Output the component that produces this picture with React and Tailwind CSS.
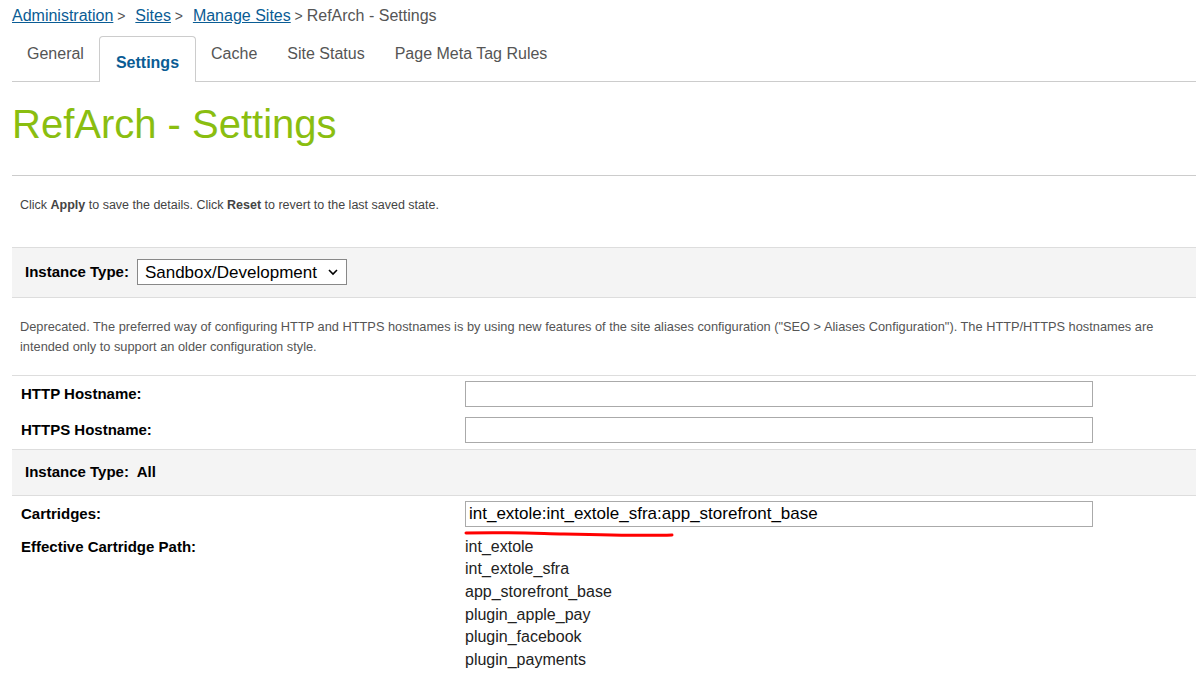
export default function App() {
  const paths = ["int_extole","int_extole_sfra","app_storefront_base","plugin_apple_pay","plugin_facebook","plugin_payments"];
  return (
    <div className="w-[1196px] h-[679px] overflow-hidden bg-white text-[#333]" style={{fontFamily:'"Liberation Sans", Arial, sans-serif'}}>
      <div className="pl-[12px] pt-[6px] text-[16px] leading-[20px] text-[#555]">
        <a className="underline text-[#0a5c94]">Administration</a><span className="text-[14px]"> &gt; </span>
        <a className="underline text-[#0a5c94] ml-[6px]">Sites</a><span className="text-[14px]"> &gt; </span>
        <a className="underline text-[#0a5c94] ml-[6px]">Manage Sites</a><span className="text-[14px]"> &gt; </span>RefArch - Settings
      </div>
      <div className="ml-[12px] mt-[10px] flex items-end border-b border-[#ccc] h-[46px] text-[16px] text-[#555]">
        <div className="px-[15px] pb-[15px]">General</div>
        <div className="h-[46px] px-[16px] pt-[14px] border border-b-0 border-[#ccc] rounded-t-[4px] bg-white -mb-px font-bold text-[#0a5c94]">Settings</div>
        <div className="px-[15px] pb-[15px]">Cache</div>
        <div className="px-[15px] pb-[15px]">Site Status</div>
        <div className="px-[15px] pb-[15px]">Page Meta Tag Rules</div>
      </div>
      <div className="ml-[12px] h-[94px] border-b border-[#ccc] flex items-center pb-[10px] text-[40px] text-[#8abe10]">RefArch - Settings</div>
      <div className="ml-[20px] mt-[20px] text-[12.5px] text-[#444]">Click <b>Apply</b> to save the details. Click <b>Reset</b> to revert to the last saved state.</div>
      <div className="ml-[12px] mt-[32px] w-[1200px] border-t border-[#ddd] text-[15px]">
        <div className="h-[50px] bg-[#f4f4f4] border-b border-[#ddd] flex items-center pl-[13px] gap-[8px]">
          <b className="text-black">Instance Type:</b>
          <div className="h-[26px] border border-[#888] bg-white flex items-center px-[7px] gap-[10px] text-[17px] text-black">Sandbox/Development
            <svg width="12" height="12" viewBox="0 0 12 12"><path d="M2 4l4 4 4-4" fill="none" stroke="#000" strokeWidth="1.6"/></svg>
          </div>
        </div>
        <div className="h-[78px] border-b border-[#ddd] pl-[8px] pt-[19px] text-[12.8px] leading-[20px] text-[#555] whitespace-nowrap">
          Deprecated. The preferred way of configuring HTTP and HTTPS hostnames is by using new features of the site aliases configuration ("SEO &gt; Aliases Configuration"). The HTTP/HTTPS hostnames are<br/>intended only to support an older configuration style.
        </div>
        <div className="h-[36px] flex items-center"><b className="w-[453px] pl-[9px] text-black">HTTP Hostname:</b><div className="w-[628px] h-[26px] border border-[#aaa]"/></div>
        <div className="h-[38px] flex items-center border-b border-[#ddd]"><b className="w-[453px] pl-[9px] text-black">HTTPS Hostname:</b><div className="w-[628px] h-[26px] border border-[#aaa]"/></div>
        <div className="h-[46px] bg-[#f4f4f4] border-b border-[#ddd] flex items-center pl-[13px]"><b className="text-black">Instance Type:&nbsp; All</b></div>
        <div className="h-[36px] flex items-center"><b className="w-[453px] pl-[9px] text-black">Cartridges:</b>
          <div className="relative w-[628px] h-[26px] border border-[#aaa] flex items-center pl-[3px] text-[17px] text-black">int_extole:int_extole_sfra:app_storefront_base
            <svg className="absolute left-[-2px] top-[28px]" width="212" height="8" viewBox="0 0 212 8"><path d="M2 3 C40 2 60 3 100 4 S180 6 208 5" fill="none" stroke="#f00" strokeWidth="3" strokeLinecap="round"/></svg>
          </div>
        </div>
        <div className="flex pt-[4px]"><b className="w-[453px] pl-[9px] text-black">Effective Cartridge Path:</b>
          <div className="text-[16px] leading-[22.6px] text-[#222]">{paths.map(p=><div key={p}>{p}</div>)}</div>
        </div>
      </div>
    </div>
  );
}
